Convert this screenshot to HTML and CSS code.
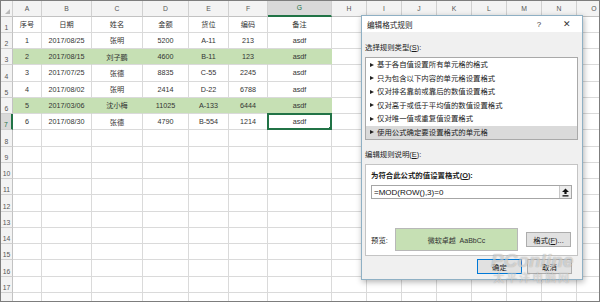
FILE: index.html
```html
<!DOCTYPE html>
<html lang="zh-CN">
<head>
    <meta charset="UTF-8">
    <title>编辑格式规则</title>
    <link rel="stylesheet" href="styles.css">
</head>
<body>
    <div class="frame">
        <!-- worksheet grid, filled in by the script below -->
        <div class="sheet" id="sheet"></div>

        <!-- conditional format dialog -->
        <div class="dialog">
            <div class="dialog-title">
                <span class="title-text">编辑格式规则</span>
                <span class="title-btn">?</span>
                <span class="title-btn close">✕</span>
            </div>
            <div class="dialog-body">
                <div class="label">选择规则类型(<u>S</u>):</div>
                <ul class="rule-list">
                    <li>基于各自值设置所有单元格的格式</li>
                    <li>只为包含以下内容的单元格设置格式</li>
                    <li>仅对排名靠前或靠后的数值设置格式</li>
                    <li>仅对高于或低于平均值的数值设置格式</li>
                    <li>仅对唯一值或重复值设置格式</li>
                    <li class="selected">使用公式确定要设置格式的单元格</li>
                </ul>
                <div class="label second">编辑规则说明(<u>E</u>):</div>
                <div class="rule-box">
                    <div class="label bold">为符合此公式的值设置格式(<u>O</u>):</div>
                    <div class="formula">
                        <span class="formula-text">=MOD(ROW(),3)=0</span>
                        <span class="ref-btn">
                            <svg width="9" height="9" viewBox="0 0 9 9">
                                <path d="M4.5 0.5 L8 4 L5.6 4 L5.6 6 L3.4 6 L3.4 4 L1 4 Z" fill="#111"/>
                                <rect x="1.5" y="7.2" width="6" height="1.3" fill="#111"/>
                            </svg>
                        </span>
                    </div>
                    <div class="preview-row">
                        <span class="preview-label">预览:</span>
                        <div class="preview">微软卓越&nbsp;&nbsp;AaBbCc</div>
                        <button class="btn format-btn">格式(<u>F</u>)...</button>
                    </div>
                </div>
                <div class="actions">
                    <button class="btn default">确定</button>
                    <button class="btn">取消</button>
                </div>
            </div>
        </div>

        <div class="watermark">
            <span class="wm-big">PConline</span>
            <span class="wm-small">太平洋电脑网</span>
        </div>
    </div>

    <script>
        const letters = ['', 'A', 'B', 'C', 'D', 'E', 'F', 'G', 'H', 'I', 'J', 'K', 'L', 'M', 'N', 'O'];
        const rows = [
            ['序号', '日期', '姓名', '金额', '货位', '编码', '备注'],
            ['1', '2017/08/25', '张明', '5200', 'A-11', '213', 'asdf'],
            ['2', '2017/08/15', '刘子鹏', '4600', 'B-11', '123', 'asdf'],
            ['3', '2017/07/25', '张德', '8835', 'C-55', '2245', 'asdf'],
            ['4', '2017/08/02', '张明', '2414', 'D-22', '6788', 'asdf'],
            ['5', '2017/03/06', '沈小梅', '11025', 'A-133', '6444', 'asdf'],
            ['6', '2017/08/30', '张德', '4790', 'B-554', '1214', 'asdf']
        ];
        const sheet = document.getElementById('sheet');

        function cell(text, cls) {
            const div = document.createElement('div');
            div.className = cls;
            div.textContent = text;
            sheet.appendChild(div);
            return div;
        }

        // column headers
        letters.forEach((l, i) => {
            let cls = 'head col-head';
            if (i === 0) cls += ' corner';
            if (l === 'G') cls += ' head-active';
            cell(l, cls);
        });

        // rows 1..18
        for (let r = 1; r <= 18; r++) {
            cell(r, 'head row-head' + (r === 7 ? ' row-active' : ''));
            const data = rows[r - 1] || [];
            for (let c = 1; c < letters.length; c++) {
                let cls = 'c';
                if ((r === 3 || r === 6) && c <= 7) cls += ' hit';
                if (r === 7 && c === 7) cls += ' active';
                cell(data[c - 1] || '', cls);
            }
        }
    </script>
</body>
</html>
```

FILE: styles.css
```css
body {
    margin: 0;
    font-family: "Liberation Sans", "Noto Sans CJK SC", sans-serif;
    background: #fff;
}
.frame {
    position: relative;
    width: 600px;
    height: 302px;
    box-sizing: border-box;
    border: 1px solid #7d7d7d;
    overflow: hidden;
}
.sheet {
    display: grid;
    grid-template-columns: 12px 29px 50px 51px 46px 40px 39px 64px repeat(8, 35px);
    grid-template-rows: 15.5px;
    grid-auto-rows: 16.25px;
    font-size: 7.2px;
    color: #333;
}
.c, .head {
    box-sizing: border-box;
    border-right: 1px solid #dadada;
    border-bottom: 1px solid #dadada;
    display: flex;
    align-items: center;
    justify-content: center;
    white-space: nowrap;
    overflow: hidden;
}
.head {
    background: #f3f3f3;
    color: #555;
    border-color: #d0d0d0;
    font-size: 6.8px;
}
.col-head {
    border-bottom-color: #c2c2c2;
}
.corner {
    position: relative;
}
.corner::after {
    content: "";
    position: absolute;
    right: 2px;
    bottom: 2px;
    border-left: 5px solid transparent;
    border-bottom: 5px solid #b9b9b9;
}
.row-head {
    border-right-color: #c2c2c2;
    align-items: flex-end;
    padding-bottom: 1px;
}
.head-active {
    background: #d9d9d9;
    color: #217346;
    border-bottom: 2px solid #217346;
}
.row-active {
    background: #d9d9d9;
    color: #217346;
    border-right: 2px solid #217346;
}
.hit {
    background: #c6e0b4;
    border-right-color: #c6e0b4;
}
.hit + .c:not(.hit) {
    border-left: 0;
}
.active {
    position: relative;
    border: 2px solid #217346;
    margin: -1px 0 0 -1px;
}
.active::after {
    content: "";
    position: absolute;
    right: -4px;
    bottom: -4px;
    width: 4px;
    height: 4px;
    background: #217346;
    border: 1px solid #fff;
}

/* dialog */
.dialog {
    position: absolute;
    left: 360px;
    top: 14px;
    width: 222px;
    height: 265px;
    box-sizing: border-box;
    border: 1px solid #8fb0c4;
    background: #f0f0f0;
    box-shadow: 1px 2px 6px rgba(0, 0, 0, 0.3);
    display: flex;
    flex-direction: column;
    font-size: 7.4px;
    color: #1a1a1a;
}
.dialog-title {
    height: 16px;
    background: #fff;
    display: flex;
    align-items: center;
    padding: 0 1px 0 5px;
}
.title-text {
    flex: 1;
    font-size: 7.6px;
}
.title-btn {
    width: 28px;
    text-align: center;
    font-size: 8px;
    color: #333;
}
.title-btn.close {
    font-size: 9px;
}
.dialog-body {
    flex: 1;
    padding: 0 4px 0 3px;
    display: flex;
    flex-direction: column;
}
.label {
    line-height: 12px;
    height: 12px;
    margin: 10px 0 3px;
}
.label.second {
    margin-top: 9px;
}
.label.bold {
    font-weight: bold;
    margin: 0 0 3px;
}
.rule-list {
    list-style: none;
    margin: 0;
    padding: 0;
    height: 83px;
    box-sizing: border-box;
    border: 1px solid #a9a9a9;
    background: #fff;
}
.rule-list li {
    height: 13.5px;
    line-height: 13.5px;
    padding-left: 11px;
    position: relative;
}
.rule-list li::before {
    content: "";
    position: absolute;
    left: 4px;
    top: 4.5px;
    border-left: 4px solid #222;
    border-top: 2.5px solid transparent;
    border-bottom: 2.5px solid transparent;
}
.rule-list li.selected {
    background: #dadada;
}
.rule-box {
    height: 92px;
    box-sizing: border-box;
    border: 1px solid #c4c4c4;
    background: #fff;
    padding: 5px 5px 0;
}
.formula {
    height: 14px;
    box-sizing: border-box;
    border: 1px solid #a6a6a6;
    display: flex;
    align-items: center;
    padding-left: 2px;
    font-size: 8px;
    color: #111;
}
.formula-text {
    flex: 1;
}
.ref-btn {
    width: 12px;
    height: 12px;
    box-sizing: border-box;
    border-left: 1px solid #c8c8c8;
    background: #ececec;
    display: flex;
    align-items: center;
    justify-content: center;
}
.preview-row {
    display: flex;
    align-items: center;
    margin-top: 29px;
}
.preview-label {
    width: 24px;
}
.preview {
    width: 123px;
    height: 23px;
    box-sizing: border-box;
    border: 1px solid #b8b8b8;
    background: #c6e0b4;
    display: flex;
    align-items: center;
    justify-content: center;
    font-size: 7px;
    color: #333;
}
.btn {
    width: 45px;
    height: 15px;
    box-sizing: border-box;
    border: 1px solid #adadad;
    background: #e1e1e1;
    font-family: inherit;
    font-size: 7.4px;
    color: #1a1a1a;
    padding: 0;
}
.format-btn {
    margin-left: 8px;
}
.actions {
    display: flex;
    justify-content: flex-end;
    gap: 5px;
    margin: 3px 6px 0 0;
}
.btn.default {
    border-color: #0078d7;
}

/* faint site watermark */
.watermark {
    position: absolute;
    left: 490px;
    top: 250px;
    display: flex;
    flex-direction: column;
    align-items: center;
    pointer-events: none;
}
.wm-big, .wm-small {
    color: rgba(255, 255, 255, 0.55);
    text-shadow: 0 0 1px rgba(0, 0, 0, 0.35);
}
.wm-big {
    font-size: 19px;
    font-weight: bold;
    font-style: italic;
    line-height: 20px;
}
.wm-small {
    font-size: 11px;
    letter-spacing: 2px;
    line-height: 14px;
}
```
